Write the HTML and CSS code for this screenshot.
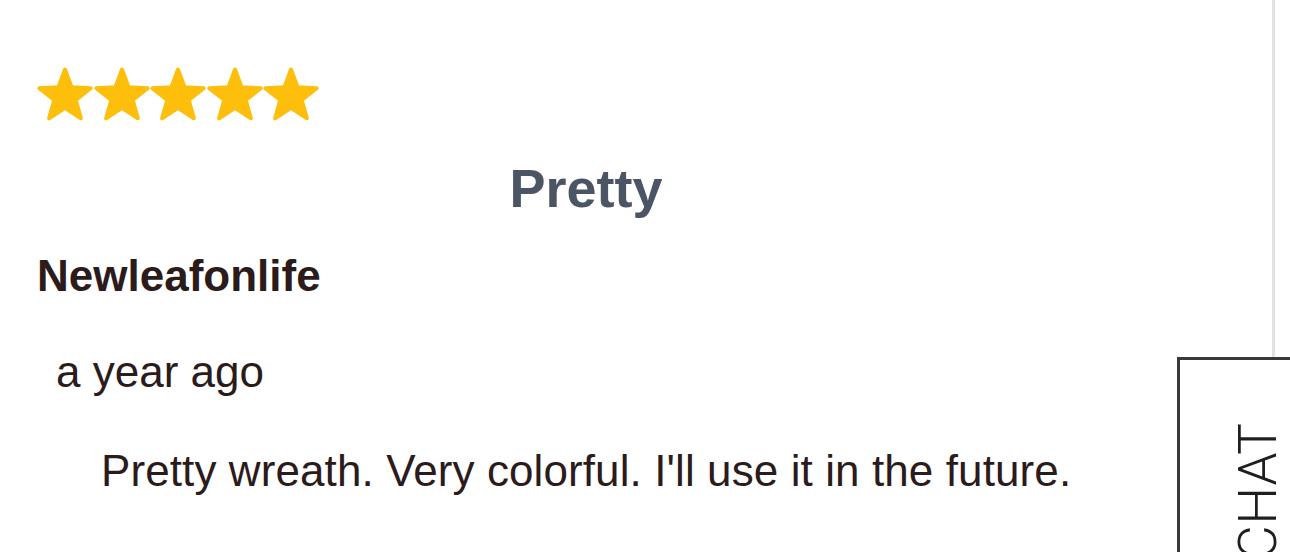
FILE: index.html
```html
<!DOCTYPE html>
<html>
<head>
    <meta charset="utf-8">
    <meta name="viewport" content="width=device-width, initial-scale=1.0">
    <title>Review</title>
    <link rel="stylesheet" href="styles.css">
</head>
<body>
<div class="page">
    <div class="review">
        <div class="stars">
            <svg class="star" viewBox="0 0 56 56"><polygon points="28,2.5 34.64,20.36 53.68,21.16 38.75,32.99 43.87,51.34 28,40.8 12.13,51.34 17.25,32.99 2.32,21.16 21.36,20.36"/></svg>
            <svg class="star" viewBox="0 0 56 56"><polygon points="28,2.5 34.64,20.36 53.68,21.16 38.75,32.99 43.87,51.34 28,40.8 12.13,51.34 17.25,32.99 2.32,21.16 21.36,20.36"/></svg>
            <svg class="star" viewBox="0 0 56 56"><polygon points="28,2.5 34.64,20.36 53.68,21.16 38.75,32.99 43.87,51.34 28,40.8 12.13,51.34 17.25,32.99 2.32,21.16 21.36,20.36"/></svg>
            <svg class="star" viewBox="0 0 56 56"><polygon points="28,2.5 34.64,20.36 53.68,21.16 38.75,32.99 43.87,51.34 28,40.8 12.13,51.34 17.25,32.99 2.32,21.16 21.36,20.36"/></svg>
            <svg class="star" viewBox="0 0 56 56"><polygon points="28,2.5 34.64,20.36 53.68,21.16 38.75,32.99 43.87,51.34 28,40.8 12.13,51.34 17.25,32.99 2.32,21.16 21.36,20.36"/></svg>
        </div>
        <h2 class="title">Pretty</h2>
        <div class="author">Newleafonlife</div>
        <div class="date">a year ago</div>
        <p class="body">Pretty wreath. Very colorful. I'll use it in the future.</p>
    </div>
</div>

<div class="chat">
    <span class="chat-label">CHAT</span>
</div>
</body>
</html>
```

FILE: styles.css
```css
body {
    margin: 0;
    background: #fff;
    font-family: "Liberation Sans", Arial, sans-serif;
    color: #2b1b1b;
    overflow: hidden;
}

.page {
    width: 1275px;
    height: 552px;
    box-sizing: border-box;
    border-right: 3px solid #e2e2e2;
}

.review {
    width: 1172px;
    box-sizing: border-box;
    padding: 67px 37px 0 37px;
}

.stars {
    display: flex;
    gap: 0.5px;
    height: 56px;
}

.star {
    width: 56px;
    height: 56px;
    overflow: visible;
}

.star polygon {
    fill: #fdbf0b;
    stroke: #fdbf0b;
    stroke-width: 4;
    stroke-linejoin: round;
}

.title {
    margin: 33px 0 0 0;
    font-size: 54px;
    line-height: 64px;
    font-weight: bold;
    text-align: center;
    color: #4b5563;
}

.author {
    margin-top: 30px;
    font-size: 44px;
    line-height: 52px;
    font-weight: bold;
}

.date {
    margin-top: 44px;
    padding-left: 19px;
    font-size: 44px;
    line-height: 52px;
}

.body {
    margin: 47px 0 0 0;
    padding-left: 64px;
    font-size: 44px;
    line-height: 52px;
    letter-spacing: 0.1px;
}

/* floating chat tab */
.chat {
    position: fixed;
    left: 1177px;
    top: 357px;
    width: 170px;
    height: 300px;
    box-sizing: border-box;
    border: 3px solid #383838;
    background: #fff;
    padding: 62px 0 0 52px;
}

.chat-label {
    display: block;
    writing-mode: vertical-rl;
    transform: rotate(180deg);
    font-family: Roboto, "Liberation Sans", sans-serif;
    font-weight: 300;
    font-size: 53px;
    line-height: 53px;
    color: #1e1e1e;
    letter-spacing: 1px;
}
```
